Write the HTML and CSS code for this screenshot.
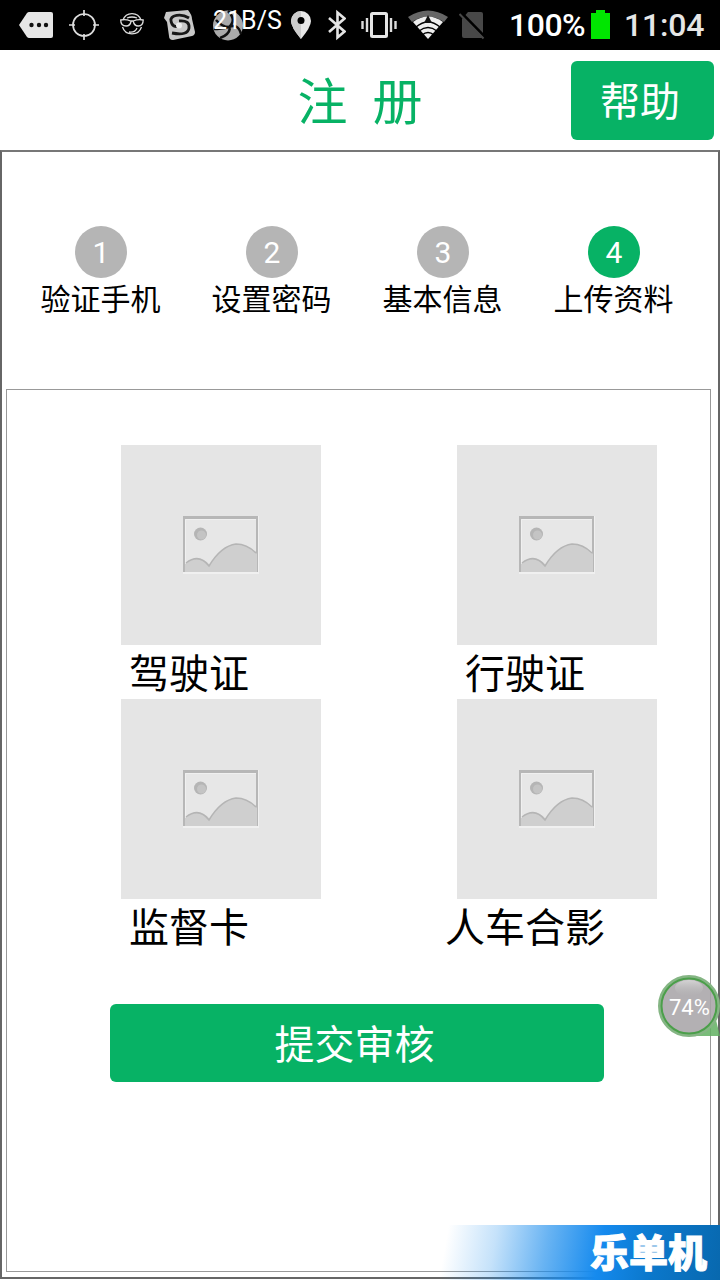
FILE: index.html
```
<!DOCTYPE html>
<html lang="zh-CN">
  <head>
    <meta charset="UTF-8" />
    <meta name="viewport" content="width=device-width, initial-scale=1.0" />
    <link rel="stylesheet" href="styles.css">
    <title>注册</title>
  </head>
  <body>
    <div class="status-bar">
      <svg class="icon-message" width="34" height="32" viewBox="19 9 34 32">
        <path d="M19 25 27 13Q28 12 29 12H51Q53 12 53 14V36Q53 38 51 38H29Q28 38 27 37Z" fill="#e6e6e6" />
        <g fill="#111"><circle cx="31.500" cy="25" r="2.200" /><circle cx="39" cy="25" r="2.200" /><circle cx="46" cy="25" r="2.200" /></g>
      </svg>
      <svg class="icon-target" width="30" height="32" viewBox="69 9 30 32">
        <g fill="none" stroke="#ddd" stroke-width="1.700"><circle cx="84" cy="25" r="11" /><path d="M84 10v6M84 34v6M69 25h6M93 25h6" /></g>
      </svg>
      <svg class="icon-face" width="24" height="32" viewBox="120 9 24 32">
        <g fill="none" stroke="#ddd" stroke-width="1.300">
          <path d="M123 20a9.500 9.500 0 0 1 18 0M122.500 27a10 10 0 0 0 19 0M127 18q5 -2 10 0M129 32q6 1 8 -4" />
          <path d="M120.700 20q5 -1 10 1h2.500q5 -2 10 -1 0 6-5 6-4 0-5-5h-2q-1 5-5 5-5.500 0-5.500-6z" />
        </g>
      </svg>
      <svg class="icon-sogou" width="32" height="32" viewBox="164 9 32 32">
        <path d="M166 12 188 10Q192 15 192 19L195 32Q195 35 192 36L173 40Q169 40 169 36L167 22 164 18Z" fill="#c8c8c8" />
        <path d="M189 18C181 13 170 15 171 21S176 27 179 26M179 21Q190 20 189 28T172 33" fill="none" stroke="#181818" stroke-width="2.800" />
        <circle cx="179" cy="25.500" r="3" fill="#eee" />
      </svg>
      <div class="net-speed">
        <svg width="30" height="32" viewBox="213 9 30 32">
          <circle cx="228" cy="25.500" r="15" fill="#aaa" />
          <path d="M216 20Q222 27 229 27Q220 29 214 29M228 11Q237 20 229 27Q238 23 241 34M230 28Q229 35 220 38" fill="none" stroke="#111" stroke-width="2.500" />
        </svg>
        <span class="net-speed-text">21B/S</span>
      </div>
      <svg class="icon-pin" width="20" height="32" viewBox="291 9 20 32">
        <path d="M301 11a10 10 0 0 1 10 10q0 6-10 18-10-12-10-18a10 10 0 0 1 10-10z" fill="#e8e8e8" />
        <path d="M301 11v28q-10-12-10-18a10 10 0 0 1 10-10z" fill="#ccc" />
        <circle cx="301" cy="20.500" r="3.500" fill="#000" />
      </svg>
      <svg class="icon-bluetooth" width="18" height="32" viewBox="328 9 18 32">
        <path d="M329 18 344.500 31.500 337.500 37.500V12.500L344.500 18.500 329 32" fill="none" stroke="#e4e4e4" stroke-width="2.600" />
      </svg>
      <svg class="icon-vibrate" width="36" height="32" viewBox="361 9 36 32">
        <rect x="371.500" y="13.500" width="15" height="23" rx="1" fill="none" stroke="#e6e6e6" stroke-width="3" />
        <path d="M367 18v14M391 18v14M362.500 21v8M395.500 21v8" stroke="#ddd" stroke-width="2.400" />
      </svg>
      <svg class="icon-wifi" width="40" height="32" viewBox="408 9 40 32">
        <path d="M408 17Q428 4 448 17L444 22Q428 11 412 22Z" fill="#666" />
        <path d="M413 22Q428 11 443 22L428 39Z" fill="#eee" />
        <path d="M416 27Q428 17 440 27M419 31Q428 24 437 31M422 35Q428 30 434 35" fill="none" stroke="#000" stroke-width="1.400" />
        <path d="M424 23l4-8 4 8z" fill="#111" />
      </svg>
      <svg class="icon-sim" width="27" height="32" viewBox="459 9 27 32">
        <path d="M468 12h13q2 0 2 2v22q0 2-2 2h-17q-2 0-2-2V19z" fill="#484848" />
        <path d="M461 12.500 485 37" stroke="#000" stroke-width="3" />
        <path d="M459.500 14 483.500 38.500" stroke="#484848" stroke-width="2" />
      </svg>
      <span class="battery-text">100%</span>
      <svg class="icon-battery" width="19" height="32" viewBox="591 9 19 32">
        <path d="M591 13h5v-3h9v3h5v26h-19z" fill="#00e600" />
      </svg>
      <span class="clock">11:04</span>
    </div>

    <div class="header">
      <h1>注&nbsp;&nbsp;册</h1>
      <button class="help-btn">帮助</button>
    </div>

    <div class="frame">
      <div class="steps">
        <div class="step"><span class="step-number">1</span>验证手机</div>
        <div class="step"><span class="step-number">2</span>设置密码</div>
        <div class="step"><span class="step-number">3</span>基本信息</div>
        <div class="step active"><span class="step-number">4</span>上传资料</div>
      </div>

      <div class="panel">
        <!-- placeholder picture shared by the four upload cells -->
        <svg class="defs" width="0" height="0">
          <symbol id="picture" viewBox="0 0 80 60">
            <rect x="2" y="1" width="76" height="58" fill="#f0f0f0" />
            <rect x="2" y="1" width="75" height="56" fill="#b7b7b7" />
            <path d="M4 4H75V56H4Z" fill="#e7e7e7" />
            <path d="M4.500 56V4.500H75" fill="none" stroke="#f0f0f0" />
            <path d="M4 49Q18 38 29 50Q40 31 55 29Q67 29 76 39V57H4Z" fill="#cfcfcf" />
            <path d="M5 48Q18 38 28 51Q40 31 55 29Q66 29 75 38" fill="none" stroke="#b5b5b5" stroke-width="1.500" />
            <circle cx="19.500" cy="19" r="6.500" fill="#b5b5b5" />
            <circle cx="20.500" cy="20" r="4.500" fill="#c4c4c4" />
          </symbol>
        </svg>
        <div class="uploads">
          <div class="upload">
            <div class="photo"><svg width="80" height="60"><use href="#picture" /></svg></div>
            <div class="caption">驾驶证</div>
          </div>
          <div class="upload">
            <div class="photo"><svg width="80" height="60"><use href="#picture" /></svg></div>
            <div class="caption">行驶证</div>
          </div>
          <div class="upload">
            <div class="photo"><svg width="80" height="60"><use href="#picture" /></svg></div>
            <div class="caption">监督卡</div>
          </div>
          <div class="upload">
            <div class="photo"><svg width="80" height="60"><use href="#picture" /></svg></div>
            <div class="caption">人车合影</div>
          </div>
        </div>
        <button class="submit-btn">提交审核</button>
      </div>
    </div>

    <div class="float-ball">
      <svg width="63" height="64" viewBox="657 974 63 64">
        <defs>
          <linearGradient id="shine" x1="0" y1="0" x2="0" y2="1">
            <stop offset="0" stop-color="#ddd" stop-opacity=".8" />
            <stop offset="1" stop-color="#bbb" stop-opacity="0" />
          </linearGradient>
        </defs>
        <path d="M689 1036Q706 1034 716 1020L720 1036Z" fill="#62b062" fill-opacity=".85" />
        <circle cx="689" cy="1006" r="29" fill="#a9a5a9" fill-opacity=".88" />
        <circle cx="689" cy="1006" r="29.500" fill="none" stroke="#85b584" stroke-width="3" />
        <circle cx="689" cy="1006" r="27.500" fill="none" stroke="#4b9f4a" stroke-width="2" />
        <ellipse cx="689" cy="988" rx="14" ry="8" fill="url(#shine)" />
      </svg>
      <span class="float-ball-text">74%</span>
    </div>

    <div class="watermark">乐单机</div>
  </body>
</html>
```
FILE: styles.css
```
* {
  box-sizing: border-box;
}

body {
  position: relative;
  display: flex;
  flex-direction: column;
  width: 720px;
  height: 1280px;
  margin: 0;
  overflow: hidden;
  background-color: #fff;
  color: #000;
  font-family: "Noto Sans CJK SC", sans-serif;
}

svg {
  display: block;
  flex: none;
}

button {
  border: 0;
  padding: 0 5px 3px 0;
  border-radius: 6px;
  background-color: #07b265;
  color: #fff;
  font-family: inherit;
  font-size: 40px;
}

.status-bar {
  display: flex;
  align-items: center;
  flex: none;
  height: 50px;
  padding-left: 19px;
  background-color: #000;
  color: #fff;
  font-family: Roboto, sans-serif;
  white-space: nowrap;
}

.icon-target {
  margin-left: 16px;
}

.icon-face {
  margin-left: 21px;
}

.icon-sogou {
  margin-left: 20px;
}

.net-speed {
  position: relative;
  width: 78px;
  margin-left: 17px;
}

.net-speed-text {
  position: absolute;
  left: 0;
  top: -4px;
  font-size: 25px;
  line-height: 31px;
}

.icon-bluetooth {
  margin-left: 17px;
}

.icon-vibrate {
  margin-left: 15px;
}

.icon-wifi,
.icon-sim {
  margin-left: 11px;
}

.battery-text {
  width: 82px;
  margin-left: 23px;
  font-size: 32px;
  font-weight: 500;
  letter-spacing: -0.5px;
}

.clock {
  margin-left: 14px;
  color: #e6e6e6;
  font-size: 32px;
  font-weight: 500;
  letter-spacing: -0.2px;
}

.header {
  display: grid;
  grid-template-columns: 1fr auto 1fr;
  align-items: center;
  flex: none;
  height: 100px;
  padding: 0 6px;
}

h1 {
  grid-column: 2;
  margin: 0;
  padding-top: 5px;
  color: #07b265;
  font-family: Roboto, "Noto Sans CJK SC", sans-serif;
  font-size: 50px;
  font-weight: 400;
  line-height: 70px;
}

.help-btn {
  justify-self: end;
  width: 143px;
  height: 79px;
}

.frame {
  display: flex;
  flex-direction: column;
  flex: 1;
  margin-bottom: 1px;
  border: 2px solid #666;
  border-top-color: #777;
  padding: 0 7px 5px 4px;
}

.steps {
  display: flex;
  height: 237px;
  padding: 74px 0 0 9px;
}

.step {
  display: flex;
  flex-direction: column;
  align-items: center;
  width: 171px;
  font-size: 30px;
  line-height: 39px;
}

.step-number {
  width: 52px;
  height: 52px;
  padding-left: 1px;
  border-radius: 50%;
  background-color: #b5b5b5;
  color: #fff;
  font-family: Roboto, sans-serif;
  line-height: 53px;
  text-align: center;
}

.step.active .step-number {
  background-color: #07b265;
}

.panel {
  flex: 1;
  border: 1px solid #999;
  padding: 55px 0 0 14px;
}

.defs {
  position: absolute;
}

.uploads {
  display: grid;
  grid-template-columns: 336px 336px;
}

.photo {
  display: flex;
  align-items: center;
  justify-content: center;
  width: 200px;
  height: 200px;
  margin-left: 100px;
  background-color: #e5e5e5;
}

.caption {
  height: 54px;
  font-size: 40px;
  line-height: 52px;
  text-align: center;
}

.submit-btn {
  display: block;
  width: 494px;
  height: 78px;
  margin: 51px 0 0 89px;
}

.float-ball {
  position: absolute;
  left: 657px;
  top: 974px;
}

.float-ball-text {
  position: absolute;
  left: 12px;
  top: 21px;
  color: #fff;
  font-family: Roboto, sans-serif;
  font-size: 22px;
  line-height: 26px;
}

.watermark {
  position: absolute;
  right: 0;
  bottom: 0;
  width: 280px;
  height: 55px;
  padding-right: 13px;
  background: linear-gradient(
    100deg,
    rgba(24, 139, 236, 0) 3%,
    rgba(24, 139, 236, 0.25) 20%,
    rgba(24, 139, 236, 0.65) 38%,
    #158aee 57%,
    #0b78cc 75%,
    #0868ae 100%
  );
  color: #fff;
  font-size: 39px;
  font-weight: 900;
  line-height: 50px;
  text-align: right;
  -webkit-text-stroke: 1px #fff;
}
```
